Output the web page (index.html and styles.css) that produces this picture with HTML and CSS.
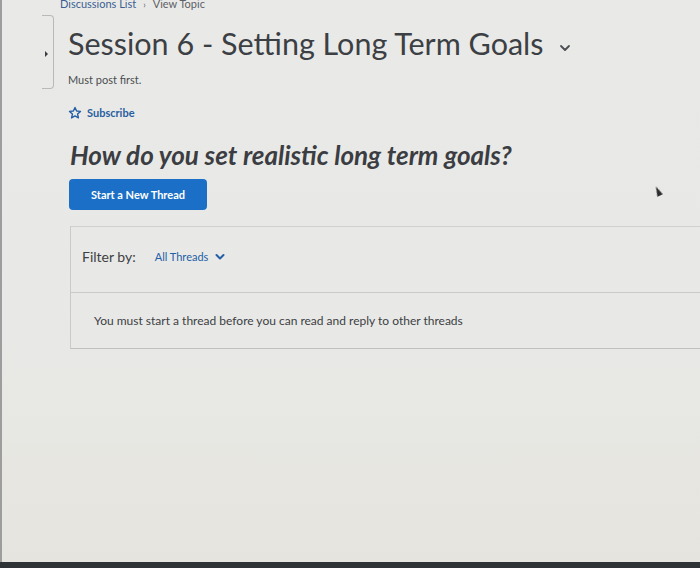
FILE: index.html
```html
<!DOCTYPE html>
<html>
<head>
<meta charset="utf-8">
<link rel="stylesheet" href="styles.css">
</head>
<body>
<div class="screen">
  <div class="page">
    <div class="side-tab"><span class="tab-mark"></span></div>
    <main class="content">
      <nav class="crumbs"><span class="crumb-link">Discussions List</span><span class="crumb-sep">›</span><span class="crumb-cur">View Topic</span></nav>
      <h1 class="title">Session 6 - Setting Long Term Goals <svg class="title-chev" width="12" height="8" viewBox="0 0 12 8"><path d="M2 2 L6 6 L10 2" fill="none" stroke="#4a4d52" stroke-width="1.8" stroke-linecap="round" stroke-linejoin="round"/></svg></h1>
      <p class="note">Must post first.</p>
      <div class="subscribe">
        <svg class="star" width="14" height="14" viewBox="0 0 24 24"><path d="M12 2.5 L14.8 8.6 L21.4 9.3 L16.4 13.8 L17.9 20.4 L12 17 L6.1 20.4 L7.6 13.8 L2.6 9.3 L9.2 8.6 Z" fill="none" stroke="#245ea6" stroke-width="2.4" stroke-linejoin="round"/></svg>
        <span>Subscribe</span>
      </div>
      <h2 class="question">How do you set realistic long term goals?</h2>
      <button class="btn">Start a New Thread</button>
      <section class="panel">
        <div class="filter">
          <span class="filter-label">Filter by:</span>
          <span class="filter-value">All Threads</span>
          <svg width="10" height="8" viewBox="0 0 10 8"><path d="M1.5 2 L5 5.5 L8.5 2" fill="none" stroke="#245ea6" stroke-width="2" stroke-linecap="round" stroke-linejoin="round"/></svg>
        </div>
        <div class="message">You must start a thread before you can read and reply to other threads</div>
      </section>
    </main>
  </div>
  <div class="cursor"></div>
</div>
<div class="bezel"></div>
</body>
</html>
```
FILE: styles.css
```css
* { box-sizing: border-box; }
html, body { margin: 0; padding: 0; }
body {
  width: 700px;
  height: 568px;
  overflow: hidden;
  font-family: Lato, "Open Sans", sans-serif;
  background: linear-gradient(180deg, #e9eae7 0%, #e8e9e6 60%, #e6e4de 100%);
  display: flex;
  flex-direction: column;
}
.screen {
  position: relative;
  flex: 1;
  border-left: 2px solid #9c9d9c;
}
.page {
  display: flex;
  padding-left: 40px;
}
.side-tab {
  margin-top: 15px;
  width: 12px;
  height: 74px;
  border: 1px solid #b9bab8;
  border-left: none;
  border-radius: 0 4px 4px 0;
  position: relative;
  flex: none;
}
.tab-mark {
  position: absolute;
  left: 3px;
  top: 35px;
  width: 0; height: 0;
  border-top: 3px solid transparent;
  border-bottom: 3px solid transparent;
  border-left: 3px solid #3b3d40;
}
.content {
  flex: 1;
  padding-left: 14px;
}
.crumbs {
  margin: -3px 0 0 -8px;
  height: 14px;
  font-size: 11px;
  line-height: 14px;
  color: #5d6066;
}
.crumb-link { color: #3a5e92; }
.crumb-sep { margin: 0 7px; font-size: 9px; }
.title {
  margin: 14px 0 0;
  font-size: 30.5px;
  font-weight: 400;
  color: #3c3f44;
  line-height: 36px;
  display: flex;
  align-items: center;
  gap: 15px;
}
.title-chev { margin-top: 10px; }
.note {
  margin: 12px 0 0;
  font-size: 11px;
  color: #4a4d51;
  line-height: 14px;
}
.subscribe {
  margin-top: 19px;
  display: flex;
  align-items: center;
  gap: 5px;
  color: #2a5e9f;
  font-size: 11px;
  font-weight: 700;
  line-height: 14px;
}
.question {
  margin: 19px 0 0 2px;
  font-size: 26px;
  font-style: italic;
  font-weight: 700;
  color: #3b3d42;
  line-height: 32px;
}
.btn {
  display: block;
  margin: 8px 0 0 1px;
  width: 138px;
  height: 31px;
  background: #1c6fc6;
  border: none;
  border-radius: 4px;
  color: #fff;
  font-family: Lato, sans-serif;
  font-weight: 700;
  font-size: 11px;
  padding: 0;
}
.panel {
  margin: 16px 0 0 2px;
  border-left: 1px solid #c9cbc9;
  border-top: 1px solid #d0d2d0;
  border-bottom: 1.5px solid #bfc1bf;
}
.filter {
  height: 65px;
  display: flex;
  align-items: center;
  padding-left: 11px;
  padding-bottom: 6px;
}
.filter-label {
  font-size: 14px;
  color: #3d4044;
  margin-right: 19px;
}
.filter-value {
  font-size: 11px;
  color: #245ea6;
  margin-right: 7px;
}
.message {
  border-top: 1px solid #c9cbc9;
  height: 56px;
  display: flex;
  align-items: center;
  padding-left: 23px;
  font-size: 12px;
  color: #3d4044;
}
.cursor {
  position: absolute;
  left: 653px;
  top: 186px;
  width: 0; height: 0;
  border-left: 3px solid transparent;
  border-right: 3px solid transparent;
  border-bottom: 10px solid #2b2c2e;
  transform: rotate(-25deg);
  filter: blur(0.5px);
}
.bezel {
  height: 6px;
  background: #2e3336;
  flex: none;
}
```
